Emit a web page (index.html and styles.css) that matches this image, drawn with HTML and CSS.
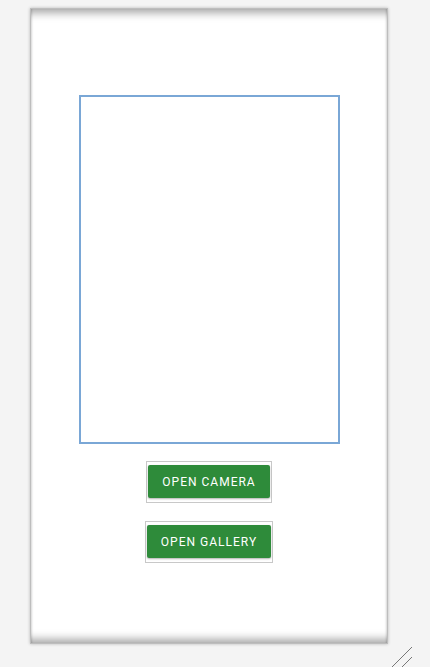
FILE: index.html
```html
<!DOCTYPE html>
<html>
<head>
<meta charset="utf-8">
<link rel="stylesheet" href="styles.css">
</head>
<body>
<div class="panel">
  <div class="preview"></div>
  <div class="btn-wrap btn-camera"><button class="btn">OPEN CAMERA</button></div>
  <div class="btn-wrap btn-gallery"><button class="btn">OPEN GALLERY</button></div>
</div>
<div class="grip">
  <svg width="22" height="22" viewBox="0 0 22 22"><path d="M20 0 L0 20 M20 10 L10 20" stroke="#777" stroke-width="1" fill="none"/></svg>
</div>
</body>
</html>
```
FILE: styles.css
```css
html, body {
  margin: 0;
  padding: 0;
  background: #f4f4f4;
  font-family: Roboto, "Liberation Sans", sans-serif;
  height: 667px;
  overflow: hidden;
}
.panel {
  box-sizing: border-box;
  margin: 8px 0 0 30px;
  width: 358px;
  height: 636px;
  background: #fff;
  border: 1px solid #bdbdbd;
  box-shadow: inset 0 12px 9px -8px rgba(0,0,0,0.35),
              inset 0 -12px 9px -8px rgba(0,0,0,0.35),
              inset 2px 0 2px -1px rgba(0,0,0,0.15),
              inset -2px 0 2px -1px rgba(0,0,0,0.15),
              0 0 3px rgba(0,0,0,0.25);
  display: flex;
  flex-direction: column;
  align-items: center;
  padding-top: 86px;
}
.preview {
  box-sizing: border-box;
  width: 261px;
  height: 349px;
  border: 2px solid #7aa7d6;
  flex: none;
}
.btn-wrap {
  box-sizing: border-box;
  border: 1px solid #c8c8c8;
  padding: 3px 1px 4px 1px;
  display: flex;
}
.btn-camera {
  margin-top: 17px;
}
.btn-gallery {
  margin-top: 18px;
}
.btn {
  border: none;
  border-radius: 2px;
  background: #2e8b3a;
  color: #fff;
  font-family: Roboto, "Liberation Sans", sans-serif;
  font-weight: 400;
  font-size: 12px;
  letter-spacing: 1px;
  padding: 0 14px;
  height: 33px;
  box-shadow: 0 1px 2px rgba(0,0,0,0.3);
}
.grip {
  position: absolute;
  left: 392px;
  top: 647px;
  line-height: 0;
}
```
